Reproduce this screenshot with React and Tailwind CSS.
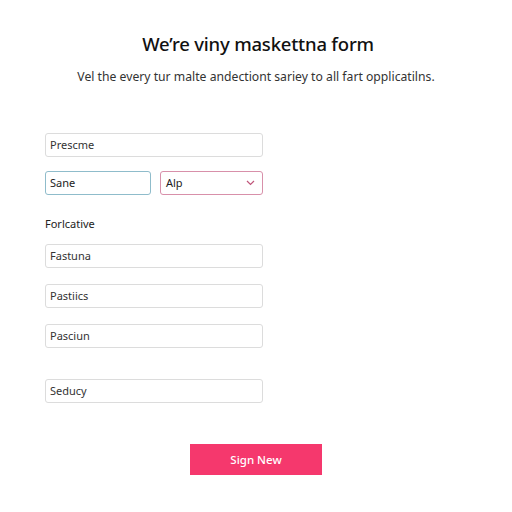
import React from 'react';

const font = { fontFamily: '"Noto Sans", "Open Sans", sans-serif' };

function Field({ value, className = '' }) {
    return (
        <div className={`h-[24px] w-[218px] rounded-[3px] border border-[#dcdcdc] bg-white flex items-center px-[4px] text-[11px] text-[#333] ${className}`}>
            {value}
        </div>
    );
}

export default function App() {
    return (
        <div className="w-[512px] h-[512px] bg-white relative overflow-hidden" style={font}>
            <div className="pt-[32px] flex flex-col items-center">
                <h1 className="text-[18.5px] leading-[24px] font-medium text-[#111] tracking-[-0.2px] pl-[4px]">We’re viny maskettna form</h1>
                <p className="mt-[13px] text-[12.2px] leading-[16px] text-[#333]">Vel the every tur malte andectiont sariey to all fart opplicatilns.</p>
            </div>
            <div className="pl-[45px] mt-[48px] flex flex-col">
                <Field value="Prescme" />
                <div className="mt-[14px] flex gap-[9px]">
                    <div className="h-[24px] w-[106px] rounded-[3px] border border-[#8fbccb] flex items-center px-[4px] text-[11px] text-[#222]">Sane</div>
                    <div className="h-[24px] w-[103px] rounded-[3px] border border-[#d890aa] flex items-center justify-between px-[5px] pr-[7px] text-[11px] text-[#222]">
                        <span>Alp</span>
                        <svg width="9" height="6" viewBox="0 0 9 6" fill="none" stroke="#c0567a" strokeWidth="1.2"><path d="M1 1l3.5 3.5L8 1" /></svg>
                    </div>
                </div>
                <div className="mt-[22px] text-[11px] leading-[14px] text-[#222]">Forlcative</div>
                <Field value="Fastuna" className="mt-[13px]" />
                <Field value="Pastiics" className="mt-[16px]" />
                <Field value="Pasciun" className="mt-[16px]" />
                <Field value="Seducy" className="mt-[31px]" />
            </div>
            <div className="mt-[41px] flex justify-center">
                <button className="w-[132px] h-[31px] bg-[#f5386d] text-white text-[11.5px] font-medium">Sign New</button>
            </div>
        </div>
    );
}
